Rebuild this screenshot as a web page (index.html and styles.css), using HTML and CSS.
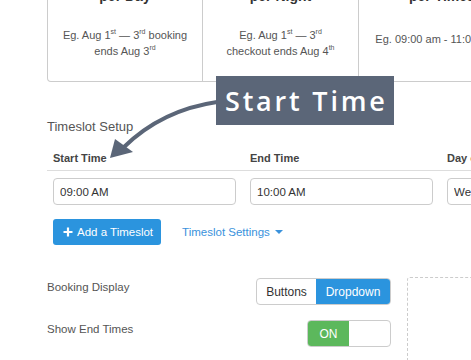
FILE: index.html
```html
<!DOCTYPE html>
<html lang="en">
<head>
    <meta charset="UTF-8">
    <meta name="viewport" content="width=device-width, initial-scale=1.0">
    <title>Timeslot Setup</title>
    <link rel="stylesheet" href="styles.css">
</head>
<body>

    <div class="page">

        <!--Tipos de cobranca (topo cortado)-->
        <div class="rates">
            <div class="rate">
                <h4>per Day</h4>
                <p>Eg. Aug 1<sup>st</sup> — 3<sup>rd</sup> booking ends Aug 3<sup>rd</sup></p>
            </div>
            <div class="rate">
                <h4>per Night</h4>
                <p>Eg. Aug 1<sup>st</sup> — 3<sup>rd</sup><br>checkout ends Aug 4<sup>th</sup></p>
            </div>
            <div class="rate rate-single">
                <h4>per Timeslot</h4>
                <p>Eg. 09:00 am - 11:00 am</p>
            </div>
        </div>

        <!--Timeslots-->
        <h3 class="section-title">Timeslot Setup</h3>

        <div class="slots">
            <div class="slot-head">Start Time</div>
            <div class="slot-head">End Time</div>
            <div class="slot-head">Day of Week</div>
            <div class="slot-cell"><input class="field" type="text" value="09:00 AM"></div>
            <div class="slot-cell"><input class="field" type="text" value="10:00 AM"></div>
            <div class="slot-cell"><input class="field" type="text" value="Weekdays"></div>
        </div>

        <div class="slot-actions">
            <button class="btn-add">
                <svg width="10" height="10" viewBox="0 0 10 10"><path d="M5 0.5v9M0.5 5h9" stroke="#fff" stroke-width="2.2"/></svg>
                Add a Timeslot
            </button>
            <a class="settings-link" href="#">Timeslot Settings <span class="caret"></span></a>
        </div>

        <!--Opcoes de exibicao-->
        <div class="settings">
            <div class="settings-list">
                <div class="setting-row">
                    <span class="setting-label">Booking Display</span>
                    <div class="segmented">
                        <span class="seg">Buttons</span>
                        <span class="seg seg-active">Dropdown</span>
                    </div>
                </div>
                <div class="setting-row">
                    <span class="setting-label">Show End Times</span>
                    <div class="toggle">
                        <span class="toggle-on">ON</span>
                        <span class="toggle-off"></span>
                    </div>
                </div>
            </div>
            <div class="preview"></div>
        </div>
    </div>

    <!--Destaque do tutorial-->
    <div class="callout">Start Time</div>
    <svg class="callout-arrow" width="471" height="360" viewBox="0 0 471 360">
        <path d="M217 102 Q162 110 124 147" fill="none" stroke="#5b6678" stroke-width="4"/>
        <polygon points="110,158 115,139 133,152" fill="#5b6678"/>
    </svg>

</body>
</html>
```

FILE: styles.css
```css
/* ---------- BASE ---------- */
html, body {
    margin:0;
    overflow:hidden;
    background:#fff;
}

body {
    width:471px;
    height:360px;
    font-family:"Liberation Sans", Arial, sans-serif;
    color:#555;
}

.page {
    padding-left:47px;
    width:700px;
}

/* ---------- CARDS DE COBRANCA ---------- */
.rates {
    display:flex;
    margin-top:-13px;
}

.rate {
    box-sizing:border-box;
    width:156px;
    padding:0 8px 22px;
    border:1px solid #ccc;
    border-top:none;
    border-left:none;
    text-align:center;
}

.rate:first-child {
    border-left:1px solid #ccc;
    border-bottom-left-radius:4px;
}

.rate h4 {
    margin:0;
    font-size:14px;
    line-height:18px;
    color:#333;
}

.rate p {
    margin:22px 0 0;
    font-size:11px;
    line-height:16px;
    color:#555;
}

.rate sup {
    font-size:7px;
    line-height:0;
    vertical-align:5px;
}

.rate-single { width:184px; }
.rate-single p {
    margin-top:26px;
    padding-right:30px;
    white-space:nowrap;
}

/* ---------- TIMESLOTS ---------- */
.section-title {
    margin:37px 0 0;
    font-size:13px;
    line-height:16px;
    font-weight:normal;
    color:#555;
}

.slots {
    display:grid;
    grid-template-columns:197px 197px 197px;
    margin-top:8px;
}

.slot-head {
    padding:8px 6px 5px;
    border-bottom:1px solid #ddd;
    font-size:11px;
    line-height:14px;
    font-weight:bold;
    color:#444;
}

.slot-cell {
    padding:7px 8px 0 6px;
}

.field {
    box-sizing:border-box;
    width:100%;
    height:27px;
    padding:0 6px;
    border:1px solid #ccc;
    border-radius:4px;
    font-family:inherit;
    font-size:11.5px;
    color:#333;
}

.slot-actions {
    display:flex;
    align-items:center;
    margin-top:14px;
    padding-left:6px;
}

.btn-add {
    display:flex;
    align-items:center;
    gap:4px;
    height:26px;
    padding:0 8px 0 10px;
    border:none;
    border-radius:3px;
    background:#2b94de;
    color:#fff;
    font-family:inherit;
    font-size:11.5px;
}

.settings-link {
    margin-left:21px;
    color:#3a92dc;
    font-size:11.5px;
    text-decoration:none;
}

.caret {
    display:inline-block;
    margin-left:2px;
    border-left:4px solid transparent;
    border-right:4px solid transparent;
    border-top:4px solid #3a92dc;
    vertical-align:2px;
}

/* ---------- OPCOES ---------- */
.settings {
    display:flex;
    margin-top:32px;
}

.settings-list {
    width:344px;
    padding-top:1px;
}

.setting-row {
    display:flex;
    justify-content:space-between;
    align-items:flex-start;
    margin-bottom:15px;
}

.setting-label {
    padding-top:2px;
    font-size:11.5px;
    line-height:14px;
    color:#555;
}

.segmented {
    display:flex;
    height:27px;
    border:1px solid #ccc;
    border-radius:4px;
    overflow:hidden;
    box-sizing:border-box;
}

.seg {
    display:flex;
    align-items:center;
    justify-content:center;
    width:59px;
    font-size:12px;
    color:#333;
}

.seg-active {
    width:74px;
    background:#2b94de;
    color:#fff;
}

.toggle {
    display:flex;
    box-sizing:border-box;
    width:84px;
    height:27px;
    border:1px solid #ccc;
    border-radius:4px;
    overflow:hidden;
}

.toggle-on {
    display:flex;
    align-items:center;
    justify-content:center;
    width:41px;
    background:#5cb85c;
    color:#fff;
    font-size:12px;
}

.preview {
    width:120px;
    height:200px;
    margin-left:16px;
    border:1px dashed #ccc;
    border-radius:3px;
}

/* ---------- DESTAQUE ---------- */
.callout {
    position:absolute;
    left:216px;
    top:76px;
    box-sizing:border-box;
    width:178px;
    height:49px;
    padding-left:9px;
    background:#5b6678;
    color:#fff;
    font-family:"Open Sans", sans-serif;
    font-weight:600;
    font-size:27px;
    letter-spacing:2.8px;
    line-height:49px;
    white-space:nowrap;
    overflow:hidden;
}

.callout-arrow {
    position:absolute;
    left:0;
    top:0;
    pointer-events:none;
}
```
